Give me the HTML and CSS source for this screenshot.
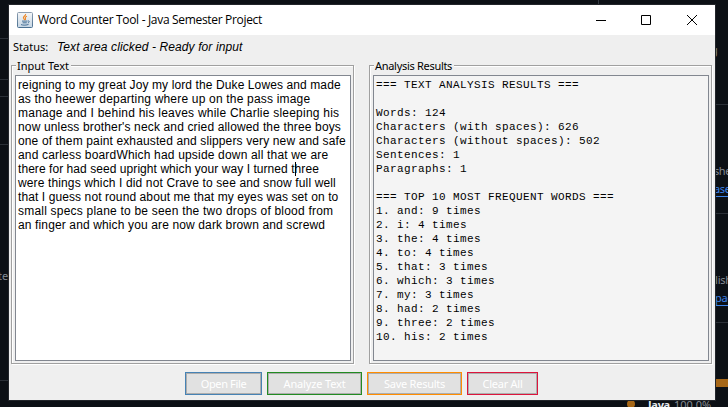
FILE: index.html
```
<!DOCTYPE html>
<html lang="en">
<head>
<meta charset="utf-8">
<title>Word Counter Tool</title>
<link rel="stylesheet" href="styles.css">
</head>
<body>
<div class="desktop">
  <i class="rule l1"></i><i class="rule l2"></i><i class="rule l3"></i><i class="rule l4"></i><i class="rule l5"></i>
  <i class="rule r1"></i><i class="rule r2"></i><i class="rule r3"></i><i class="vrule"></i>
  <span class="back b1">ter</span>
  <span class="back b2">g</span>
  <span class="back b3">she</span>
  <span class="back link b4">ase</span>
  <span class="back b5">lish</span>
  <span class="back link b6">pac</span>
  <i class="langbar"></i><i class="dot"></i>
  <span class="back b7">Java</span>
  <span class="back b8">100.0%</span>

  <main class="window">
    <header class="titlebar">
      <svg class="logo" width="16" height="16" viewBox="0 0 16 16">
        <defs><linearGradient id="g" x1="0" y1="0" x2="0" y2="1"><stop offset="0" stop-color="#8c9db0"/><stop offset="1" stop-color="#4b7192"/></linearGradient>
        <linearGradient id="h" x1="0" y1="0" x2="0" y2="1"><stop offset="0" stop-color="#f4f6f8"/><stop offset="1" stop-color="#c6d6e4"/></linearGradient></defs>
        <rect x=".5" y=".5" width="15" height="15" rx="1" fill="url(#h)" stroke="url(#g)"/>
        <path d="M8.6 2c.6 1.6-2.4 2.3-2.2 3.8.1.9 1.2 1.4 1.2 2.4M10 4.2c-1.4.5-2 1.1-1.6 2 .3.7.4 1.1-.2 1.8" fill="none" stroke="#ee8420" stroke-width="1.1"/>
        <path d="M5 9.1h5.4M5.6 10.8h4.2M4 12.6c2 .8 6 .7 7.6-.3M10.8 9c1.9-.4 2 1.3 0 1.9" fill="none" stroke="#456f96" stroke-width="1"/>
      </svg>
      <span class="title">Word Counter Tool - Java Semester Project</span>
      <svg class="controls" width="100" height="12" viewBox="0 0 100 12" fill="none" stroke="#000">
        <path d="M0 6.5h10M45.500 1.500h9v9h-9z"/><path d="M91 1l10 10M101 1L91 11" />
      </svg>
    </header>
    <div class="status"><span class="label">Status:</span><em class="message">Text area clicked - Ready for input</em></div>
    <div class="panels">
      <section class="group input">
        <h2 class="legend">Input Text</h2>
        <div class="box editor">
          <div class="line">reigning to my great Joy my lord the Duke Lowes and made</div>
          <div class="line">as tho heewer departing where up on the pass image</div>
          <div class="line">manage and I behind his leaves while Charlie sleeping his</div>
          <div class="line">now unless brother's neck and cried allowed the three boys</div>
          <div class="line">one of them paint exhausted and slippers very new and safe</div>
          <div class="line">and carless boardWhich had upside down all that we are</div>
          <div class="line">there for had seed upright which your way I turned t<i class="caret"></i>hree</div>
          <div class="line">were things which I did not Crave to see and snow full well</div>
          <div class="line">that I guess not round about me that my eyes was set on to</div>
          <div class="line">small specs plane to be seen the two drops of blood from</div>
          <div class="line">an finger and which you are now dark brown and screwd</div>
        </div>
      </section>
      <section class="group results">
        <h2 class="legend">Analysis Results</h2>
        <pre class="box report">=== TEXT ANALYSIS RESULTS ===

Words: 124
Characters (with spaces): 626
Characters (without spaces): 502
Sentences: 1
Paragraphs: 1

=== TOP 10 MOST FREQUENT WORDS ===
1. and: 9 times
2. i: 4 times
3. the: 4 times
4. to: 4 times
5. that: 3 times
6. which: 3 times
7. my: 3 times
8. had: 2 times
9. three: 2 times
10. his: 2 times</pre>
      </section>
    </div>
    <footer class="actions">
      <button class="btn open">Open File</button>
      <button class="btn analyze">Analyze Text</button>
      <button class="btn save">Save Results</button>
      <button class="btn clear">Clear All</button>
    </footer>
  </main>
</div>
</body>
</html>
```
FILE: styles.css
```
* { box-sizing: border-box; }
body { margin: 0; overflow: hidden; }
.desktop { position: relative; width: 728px; height: 407px; padding: 5px 0 0 9px; overflow: hidden; background: #0c1015; }

.window { position: relative; display: flex; flex-direction: column; width: 706px; height: 395px; background: #efefef; color: #000; box-shadow: 0 0 0 1px #22252a; }
.titlebar { display: flex; align-items: center; height: 30px; flex: none; padding: 0 19px 0 8px; background: #fff; }
.logo { margin-top: -1px; }
.title { margin-left: 5px; font: 12px/16px "Open Sans", sans-serif; letter-spacing: -.32px; white-space: nowrap; }
.controls { margin: -1px 0 0 auto; overflow: visible; }

.status { display: flex; align-items: center; height: 24px; flex: none; padding-left: 4px; white-space: nowrap; }
.label { width: 44px; font: 11px/14px "Noto Sans", sans-serif; }
.message { font: italic 12px/14px "Liberation Sans", sans-serif; letter-spacing: .11px; }

.panels { display: grid; grid-template-columns: 344px 344px; column-gap: 14px; padding: 6px 2px 0; flex: none; height: 306px; }
.group { position: relative; width: 343px; height: 299px; padding: 10px 3px 3px 4px; border: 1px solid #a0a0a0; box-shadow: 1px 1px 0 #fff, inset 1px 1px 0 #fff; }
.legend { position: absolute; top: -7px; left: 4px; margin: 0; padding: 0 2px 0 1px; background: #efefef; font: 11px/13px "Noto Sans", sans-serif; white-space: nowrap; }
.results .legend { letter-spacing: -.3px; }
.box { margin: -1px 0 0 -1px; width: 336px; height: 286px; border: 1px solid #828790; }
.editor { padding: 2px; background: #fff; font: 12px/14px "Liberation Sans", sans-serif; white-space: nowrap; }
.line { height: 14px; letter-spacing: .13px; }
.line:nth-child(1) { letter-spacing: .105px; }
.line:nth-child(2) { letter-spacing: .19px; }
.line:nth-child(3) { letter-spacing: .23px; }
.line:nth-child(4) { letter-spacing: .147px; }
.line:nth-child(6) { letter-spacing: .176px; }
.line:nth-child(7) { letter-spacing: .06px; }
.line:nth-child(9) { letter-spacing: .095px; }
.line:nth-child(10) { letter-spacing: .21px; }
.caret { display: inline-block; width: 1px; height: 14px; margin: 0 -1px 0 0; vertical-align: top; background: #000; }
.report { padding: 2px; background: #f4f4f4; font: 11px/14px "Liberation Mono", monospace; letter-spacing: .4px; }

.actions { display: flex; justify-content: center; gap: 5px; padding-right: 1px; padding-top: 7px; }
.btn { height: 23px; padding: 0; border: 1px solid; background: #e1e1e1; box-shadow: inset 0 0 0 1px #adadad; color: #fff; font: 11px/19px "Noto Sans", sans-serif; letter-spacing: -.15px; white-space: nowrap; }
.open { width: 77px; border-color: #4682b4; letter-spacing: -.35px; }
.analyze { width: 95px; border-color: #228b22; }
.save { width: 95px; border-color: #ff8c00; letter-spacing: -.25px; }
.clear { width: 71px; border-color: #dc143c; letter-spacing: -.25px; }

.rule { position: absolute; height: 1px; background: #2b3037; }
.l1, .l2, .l3, .l4, .l5 { left: 0; width: 9px; }
.l1 { top: 38px; } .l2 { top: 79px; } .l3 { top: 96px; } .l4 { top: 144px; } .l5 { top: 380px; }
.r1, .r2, .r3 { left: 715px; width: 13px; }
.r1 { top: 104px; } .r2 { top: 213px; } .r3 { top: 322px; }
.vrule { position: absolute; left: 598px; top: 0; width: 1px; height: 5px; background: #343a42; }
.back { position: absolute; color: #858b93; font: 11px/14px "Noto Sans", sans-serif; white-space: nowrap; }
.link { color: #3b82e8; border-bottom: 1px solid #3b82e8; }
.b1 { left: -2px; top: 269px; }
.b2 { left: 711px; top: 43px; }
.b3 { left: 714px; top: 164px; letter-spacing: -.4px; }
.b4 { left: 714px; top: 182px; letter-spacing: -.4px; }
.b5 { left: 715px; top: 273px; letter-spacing: -.2px; }
.b6 { left: 715px; top: 291px; letter-spacing: -.2px; }
.langbar { position: absolute; left: 715px; top: 379px; width: 13px; height: 8px; background: #a66717; }
.dot { position: absolute; left: 627px; top: 400px; width: 8px; height: 8px; border-radius: 50%; background: #a66717; }
.b7 { left: 648px; top: 398px; font-weight: 700; color: #e6ebf0; letter-spacing: -.3px; }
.b8 { left: 674px; top: 398px; }
```
